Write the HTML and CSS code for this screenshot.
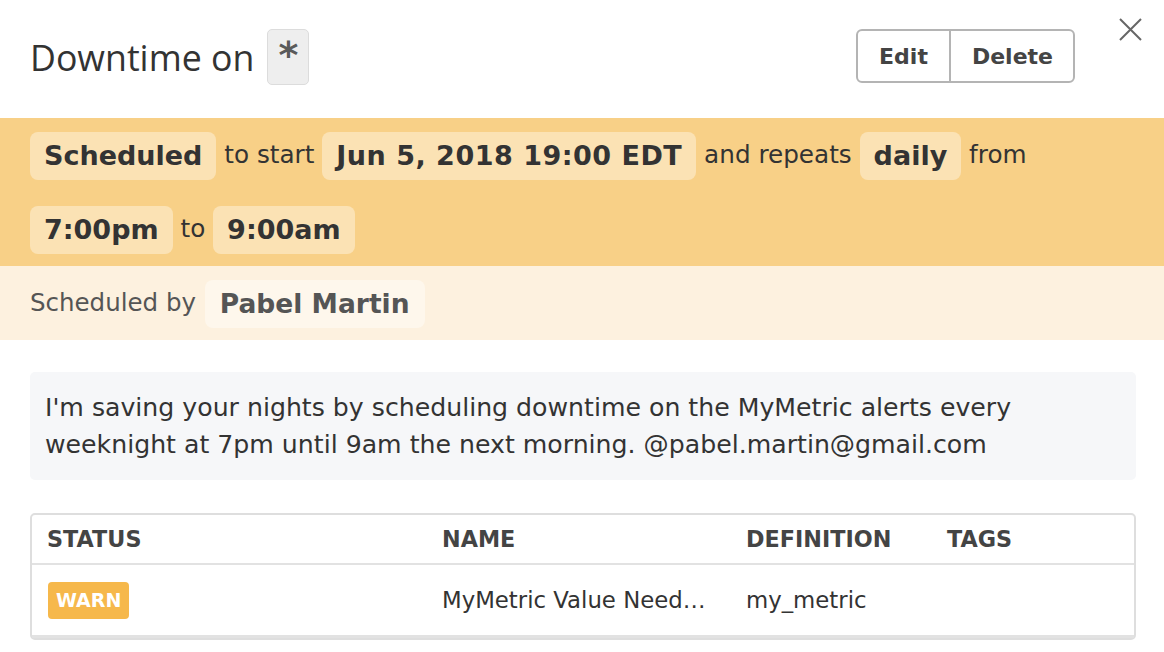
FILE: index.html
```html
<!DOCTYPE html>
<html>
<head>
<meta charset="utf-8">
<link rel="stylesheet" href="styles.css">
</head>
<body>
<div class="modal">
  <div class="header">
    <div class="title">
      <h1>Downtime on</h1>
      <span class="scope">*</span>
    </div>
    <div class="actions">
      <button class="btn">Edit</button><button class="btn">Delete</button>
    </div>
    <button class="close" aria-label="Close">
      <svg width="23" height="23" viewBox="0 0 23 23"><path d="M1 1 L22 22 M22 1 L1 22" stroke="#666" stroke-width="2" fill="none"/></svg>
    </button>
  </div>
  <div class="band-main">
    <span class="pill">Scheduled</span> to start <span class="pill pill-date">Jun 5, 2018 19:00 EDT</span> and repeats <span class="pill">daily</span> from <span class="pill">7:00pm</span> to <span class="pill">9:00am</span>
  </div>
  <div class="band-sub">
    Scheduled by <span class="pill pill-light">Pabel Martin</span>
  </div>
  <div class="note">I'm saving your nights by scheduling downtime on the MyMetric alerts every weeknight at 7pm until 9am the next morning. @pabel.martin@gmail.com</div>
  <div class="table">
    <div class="row head">
      <div class="cell">STATUS</div>
      <div class="cell">NAME</div>
      <div class="cell">DEFINITION</div>
      <div class="cell">TAGS</div>
    </div>
    <div class="row body">
      <div class="cell"><span class="badge">WARN</span></div>
      <div class="cell">MyMetric Value Need…</div>
      <div class="cell">my_metric</div>
      <div class="cell"></div>
    </div>
  </div>
</div>
</body>
</html>
```
FILE: styles.css
```css
html, body {
  margin: 0;
  padding: 0;
  background: #fff;
}
body {
  font-family: "DejaVu Sans", "Open Sans", sans-serif;
  color: #333;
  width: 1164px;
  height: 652px;
  overflow: hidden;
}
.header {
  display: flex;
  align-items: flex-start;
  height: 118px;
  box-sizing: border-box;
  padding: 29px 22px 0 30px;
}
.title {
  display: flex;
  align-items: center;
  gap: 13px;
  flex: 1;
}
.title h1 {
  margin: 0;
  font-family: "Open Sans", sans-serif;
  font-weight: 400;
  font-size: 35.7px;
  line-height: 56px;
  color: #333;
}
.scope {
  display: inline-block;
  width: 42px;
  height: 56px;
  box-sizing: border-box;
  background: #eeeeee;
  border: 1px solid #dcdcdc;
  border-radius: 5px;
  text-align: center;
  font-family: "DejaVu Sans", sans-serif;
  font-weight: 700;
  font-size: 38px;
  line-height: 50px;
  color: #5a5a5a;
}
.actions {
  display: flex;
}
.btn {
  font-family: "DejaVu Sans", sans-serif;
  font-weight: 700;
  font-size: 22px;
  color: #444;
  background: #fff;
  border: 2px solid #b4b4b4;
  height: 54px;
  padding: 0 19px;
  margin: 0;
  cursor: pointer;
}
.btn:first-child {
  border-radius: 6px 0 0 6px;
  border-right-width: 1px;
  padding: 0 21px;
}
.btn:last-child {
  border-radius: 0 6px 6px 0;
  border-left-width: 1px;
  padding: 0 20px 0 21px;
}
.close {
  background: none;
  border: 0;
  padding: 0;
  margin: -11px 0 0 44px;
  width: 23px;
  height: 23px;
  cursor: pointer;
}
.close svg { display: block; }
.band-main {
  background: #f8d087;
  padding: 0 30px;
  font-size: 24.7px;
  line-height: 74px;
  color: #333;
}
.pill {
  display: inline-block;
  background: #fbe2b4;
  border-radius: 8px;
  padding: 0 14px;
  line-height: 48px;
  font-weight: 700;
  font-size: 27px;
  vertical-align: middle;
  color: #333;
}
.pill-date {
  letter-spacing: 0.5px;
}
.band-sub {
  background: #fdf1df;
  padding: 0 30px;
  height: 74px;
  font-size: 24.5px;
  line-height: 74px;
  color: #555;
}
.pill-light {
  background: #fef7ec;
  color: #555;
  font-size: 26.5px;
  padding: 0 15px;
  margin-left: 1px;
}
.note {
  margin: 32px 28px 0 30px;
  background: #f6f7f9;
  border-radius: 5px;
  padding: 17px 15px;
  font-size: 25.2px;
  line-height: 37px;
  color: #333;
}
.table {
  margin: 33px 28px 0 30px;
  border: 2px solid #dedede;
  border-radius: 5px;
}
.row {
  display: grid;
  grid-template-columns: 395px 304px 201px 1fr;
}
.cell {
  padding-left: 15px;
  box-sizing: border-box;
  min-width: 0;
  white-space: nowrap;
}
.head {
  height: 48px;
  border-bottom: 2px solid #e2e2e2;
  font-weight: 700;
  font-size: 22.3px;
  line-height: 48px;
  color: #444;
}
.body {
  height: 70px;
  border-bottom: 3px solid #e2e2e2;
  align-items: center;
  font-size: 22.8px;
  color: #333;
}
.badge {
  display: inline-block;
  background: #f6b84b;
  color: #fff;
  font-weight: 700;
  font-size: 19px;
  line-height: 37px;
  padding: 0 8px;
  border-radius: 4px;
  margin-left: 1px;
}
```
